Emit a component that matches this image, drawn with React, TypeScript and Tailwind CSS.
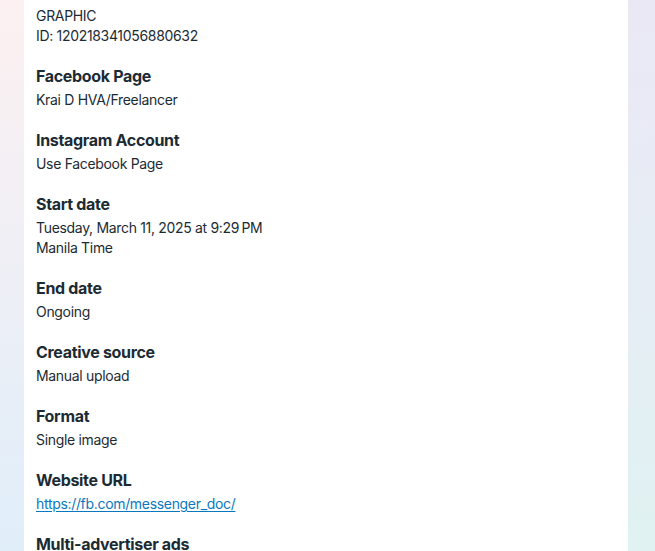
import React from "react";

type Field = {
  label: string;
  lines: string[];
  href?: string;
};

const fields: Field[] = [
  { label: "Facebook Page", lines: ["Krai D HVA/Freelancer"] },
  { label: "Instagram Account", lines: ["Use Facebook Page"] },
  {
    label: "Start date",
    lines: ["Tuesday, March 11, 2025 at 9:29\u202FPM", "Manila Time"],
  },
  { label: "End date", lines: ["Ongoing"] },
  { label: "Creative source", lines: ["Manual upload"] },
  { label: "Format", lines: ["Single image"] },
  {
    label: "Website URL",
    lines: ["https://fb.com/messenger_doc/"],
    href: "https://fb.com/messenger_doc/",
  },
  { label: "Multi-advertiser ads", lines: ["No"] },
];

function DetailRow({ field }: { field: Field }) {
  return (
    <div className="mt-5">
      <h3 className="text-[16px] leading-5 font-bold text-[#1c2b33]">
        {field.label}
      </h3>
      <div className="mt-1 text-[14px] leading-5 text-[#1c2b33]">
        {field.href ? (
          <a href={field.href} className="text-[#0a78be] underline underline-offset-2">
            {field.lines[0]}
          </a>
        ) : (
          field.lines.map((line) => <p key={line}>{line}</p>)
        )}
      </div>
    </div>
  );
}

export default function App() {
  return (
    <div
      className="flex h-screen overflow-hidden tracking-[-0.02em]"
      style={{ fontFamily: "Inter, 'Noto Sans', sans-serif" }}
    >
      <div className="w-6 shrink-0 bg-[linear-gradient(to_bottom,#fcf0f1,#e0eefa)]" />

      {/* ad details card */}
      <div className="flex-1 bg-white px-3 pt-[6px]">
        <div className="text-[14px] leading-5 text-[#1c2b33]">
          <p>GRAPHIC</p>
          <p>ID: 120218341056880632</p>
        </div>
        {fields.map((field) => (
          <DetailRow key={field.label} field={field} />
        ))}
      </div>

      <div className="w-[27px] shrink-0 bg-[linear-gradient(to_bottom,#ebe8f6,#e0f2f2)]" />
    </div>
  );
}
